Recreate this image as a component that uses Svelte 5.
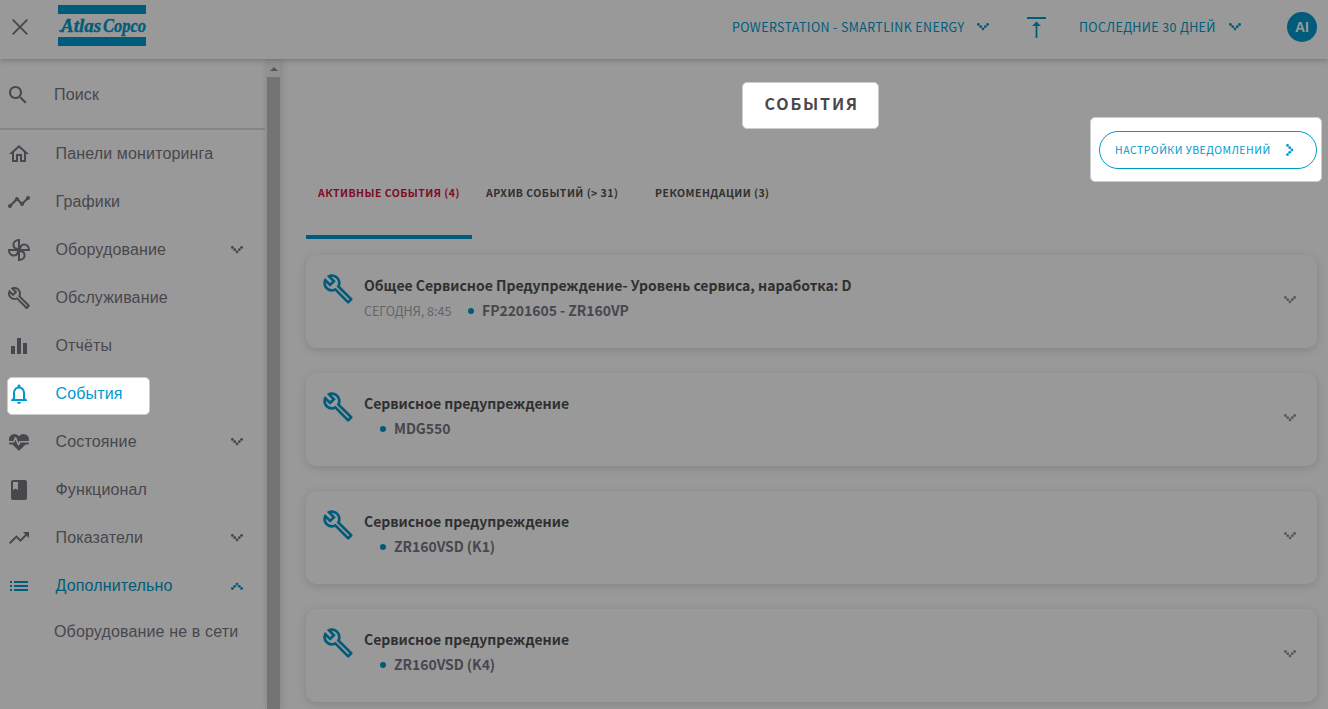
<script>
  const icons = {
    home: "M12 5.69l5 4.5V18h-2v-6H9v6H7v-7.81l5-4.5M12 3L2 12h3v8h6v-6h2v6h6v-8h3L12 3z",
    timeline:
      "M23 8c0 1.1-.9 2-2 2-.18 0-.35-.02-.51-.07l-3.56 3.55c.05.16.07.34.07.52 0 1.1-.9 2-2 2s-2-.9-2-2c0-.18.02-.36.07-.52l-2.55-2.55c-.16.05-.34.07-.52.07s-.36-.02-.52-.07l-4.55 4.56c.05.16.07.33.07.51 0 1.1-.9 2-2 2s-2-.9-2-2 .9-2 2-2c.18 0 .35.02.51.07l4.56-4.55C8.02 9.36 8 9.18 8 9c0-1.1.9-2 2-2s2 .9 2 2c0 .18-.02.36-.07.52l2.55 2.55c.16-.05.34-.07.52-.07s.36.02.52.07l3.55-3.56C19.02 8.35 19 8.18 19 8c0-1.1.9-2 2-2s2 .9 2 2z",
    wrench:
      "M22.61 18.99l-9.08-9.08c.93-2.34.45-5.1-1.44-7C9.79.61 6.21.4 3.66 2.26L7.5 6.11 6.08 7.52 2.25 3.69C.39 6.23.6 9.82 2.9 12.11c1.86 1.86 4.57 2.35 6.89 1.48l9.11 9.11c.39.39 1.02.39 1.41 0l2.3-2.3c.4-.38.4-1.01 0-1.41zm-3 1.6l-9.46-9.46c-.61.45-1.29.72-2 .82-1.36.2-2.79-.21-3.83-1.25C3.37 9.76 2.93 8.5 3 7.26l3.09 3.09 4.24-4.24-3.09-3.09c1.24-.07 2.49.37 3.44 1.31 1.08 1.08 1.49 2.57 1.24 3.96-.12.71-.42 1.37-.88 1.96l9.45 9.45-.88.89z",
    bars: "M4 12h4v8H4zM10 4h4v16h-4zM16 9h4v11h-4z",
    bell: "M12 22c1.1 0 2-.9 2-2h-4c0 1.1.9 2 2 2zm6-6v-5c0-3.07-1.63-5.64-4.5-6.32V4c0-.83-.67-1.5-1.5-1.5s-1.5.67-1.5 1.5v.68C7.64 5.36 6 7.92 6 11v5l-2 2v1h16v-1l-2-2zm-2 1H8v-6c0-2.48 1.51-4.5 4-4.5s4 2.02 4 4.5v6z",
    heart:
      "M7.5,4A5.5,5.5 0 0,0 2,9.5C2,10 2.09,10.5 2.22,11H6.3L7.57,7.63C7.87,6.83 9.05,6.75 9.43,7.63L11.5,13L12.09,11.58C12.22,11.25 12.57,11 13,11H21.78C21.91,10.5 22,10 22,9.5A5.5,5.5 0 0,0 16.5,4C14.64,4 13,4.93 12,6.34C11,4.93 9.36,4 7.5,4M3,12.5A1,1 0 0,0 2,13.5A1,1 0 0,0 3,14.5H5.44L11,20C12,20.9 12,20.9 13,20L18.56,14.5H21A1,1 0 0,0 22,13.5A1,1 0 0,0 21,12.5H13.4L12.47,14.8C12.07,15.81 10.92,15.67 10.55,14.83L8.5,9.5L7.54,11.83C7.39,12.21 7.05,12.5 6.6,12.5H3Z",
    book: "M18 2H6c-1.1 0-2 .9-2 2v16c0 1.1.9 2 2 2h12c1.1 0 2-.9 2-2V4c0-1.1-.9-2-2-2zM6 4h5v8l-2.5-1.5L6 12V4z",
    trend: "M16 6l2.29 2.29-4.88 4.88-4-4L2 16.59 3.41 18l6-6 4 4 6.3-6.29L22 12V6z",
    list: "M3 13h2v-2H3v2zm0 4h2v-2H3v2zm0-8h2V7H3v2zm4 4h14v-2H7v2zm0 4h14v-2H7v2zM7 7v2h14V7H7z",
    search:
      "M15.5 14h-.79l-.28-.27C15.41 12.59 16 11.11 16 9.5 16 5.91 13.09 3 9.5 3S3 5.91 3 9.5 5.91 16 9.5 16c1.61 0 3.09-.59 4.23-1.57l.27.28v.79l5 4.99L20.49 19l-4.99-5zm-6 0C7.01 14 5 11.99 5 9.5S7.01 5 9.5 5 14 7.01 14 9.5 11.99 14 9.5 14z",
  };

  const chevronDots = [
    [1.4, 1.5],
    [3.7, 3.7],
    [6, 5.9],
    [8.3, 3.7],
    [10.6, 1.5],
  ];

  const menu = [
    { label: "Панели мониторинга", icon: "home" },
    { label: "Графики", icon: "timeline" },
    { label: "Оборудование", icon: "fan", arrow: "down" },
    { label: "Обслуживание", icon: "wrench" },
    { label: "Отчёты", icon: "bars" },
    { label: "События", icon: "bell", selected: true },
    { label: "Состояние", icon: "heart", arrow: "down" },
    { label: "Функционал", icon: "book" },
    { label: "Показатели", icon: "trend", arrow: "down" },
    { label: "Дополнительно", icon: "list", arrow: "up", open: true },
  ];

  const tabs = [
    { label: "АКТИВНЫЕ СОБЫТИЯ (4)", active: true },
    { label: "АРХИВ СОБЫТИЙ (> 31)" },
    { label: "РЕКОМЕНДАЦИИ (3)" },
  ];

  const events = [
    {
      title: "Общее Сервисное Предупреждение- Уровень сервиса, наработка: D",
      time: "СЕГОДНЯ, 8:45",
      machine: "FP2201605 - ZR160VP",
    },
    { title: "Сервисное предупреждение", machine: "MDG550" },
    { title: "Сервисное предупреждение", machine: "ZR160VSD (K1)" },
    { title: "Сервисное предупреждение", machine: "ZR160VSD (K4)" },
  ];
</script>

{#snippet icon(name)}
  <svg class="icon" viewBox="0 0 24 24">
    {#if name === "fan"}
      {#each [0, 90, 180, 270] as angle}
        <path
          class="blade"
          transform="rotate({angle} 12 12)"
          d="M12 12V2C8.6 2 6.4 4.2 6.4 6.8C6.4 9.4 8.8 11 12 11"
        />
      {/each}
    {:else}
      <path d={icons[name]} />
    {/if}
  </svg>
{/snippet}

{#snippet chevron(dir)}
  <svg class="chevron {dir}" viewBox="0 0 12 8">
    {#each chevronDots as [cx, cy]}
      <circle {cx} {cy} r="1.4" />
    {/each}
  </svg>
{/snippet}

<div class="page">
  <header>
    <svg class="close" viewBox="0 0 16 16"><path d="M.7 .7l14.6 14.6M15.3 .7L.7 15.3" /></svg>
    <svg class="logo" viewBox="0 0 88 41">
      <path d="M0 0h88v9H0zM0 32h88v9H0z" />
      <path class="swash" d="M1 25.3c1.5 1.6 4 .8 5.5-1.5M8 16.5c1.5-1.500 3-2 5-1.7" />
      <text x="3" y="26.5" textLength="40" lengthAdjust="spacingAndGlyphs">Atlas</text>
      <text x="45" y="26.5" textLength="43" lengthAdjust="spacingAndGlyphs">Copco</text>
    </svg>
    <div class="dropdown site"><span>POWERSTATION - SMARTLINK ENERGY</span>{@render chevron("down")}</div>
    <svg class="to-top" viewBox="0 0 19 21"><path d="M0 0h19v2H0zM9.5 4.5l4.5 4.5h-3.6v12H8.6V9H5z" /></svg>
    <div class="dropdown period"><span>ПОСЛЕДНИЕ 30 ДНЕЙ</span>{@render chevron("down")}</div>
    <div class="avatar">AI</div>
  </header>

  <div class="body">
    <aside>
      <div class="search">{@render icon("search")}<span>Поиск</span></div>
      <nav>
        {#each menu as item}
          <div class="item" class:selected={item.selected} class:open={item.open}>
            {@render icon(item.icon)}
            <span>{item.label}</span>
            {#if item.arrow}{@render chevron(item.arrow)}{/if}
          </div>
        {/each}
        <div class="subitem">Оборудование не в сети</div>
      </nav>
    </aside>
    <div class="scrollbar">
      <div class="arrow"></div>
      <div class="thumb"></div>
    </div>

    <main>
      <h1>СОБЫТИЯ</h1>
      <div class="settings">
        <button><span>НАСТРОЙКИ УВЕДОМЛЕНИЙ</span>{@render chevron("right")}</button>
      </div>
      <div class="tabs">
        {#each tabs as tab}
          <div class="tab" class:active={tab.active}>{tab.label}</div>
        {/each}
      </div>
      {#each events as event}
        <div class="card">
          {@render icon("wrench")}
          <div class="info">
            <div class="title">{event.title}</div>
            <div class="meta" class:untimed={!event.time}>
              {#if event.time}<span class="time">{event.time}</span>{/if}
              <i></i>
              <span class="machine">{event.machine}</span>
            </div>
          </div>
          {@render chevron("down")}
        </div>
      {/each}
    </main>
  </div>
</div>

<style>
  :global(body) {
    margin: 0;
    overflow: hidden;
  }

  .page {
    width: 1328px;
    height: 709px;
    overflow: hidden;
    display: flex;
    flex-direction: column;
    background: #999;
    color: #48474d;
    font-family: "Noto Sans CJK SC", "Noto Sans", sans-serif;
  }

  svg {
    display: block;
    flex: none;
    fill: currentColor;
  }

  .icon {
    width: 24px;
    height: 24px;
  }

  .blade {
    fill: none;
    stroke: currentColor;
    stroke-width: 2;
  }

  .chevron {
    width: 12px;
    height: 8px;
  }

  .chevron.up {
    transform: rotate(180deg);
  }

  .chevron.right {
    transform: rotate(-90deg);
  }

  header {
    position: relative;
    z-index: 2;
    box-sizing: border-box;
    flex: none;
    height: 59px;
    display: flex;
    align-items: flex-start;
    background: #999;
    box-shadow: 0 2px 5px rgba(0, 0, 0, 0.2);
    color: #005c7a;
  }

  .close {
    width: 16px;
    height: 16px;
    margin: 19px 0 0 12px;
    stroke: #48474d;
    stroke-width: 1.8;
  }

  .logo {
    width: 88px;
    height: 41px;
    margin: 5px 0 0 30px;
    overflow: visible;
  }

  .logo text {
    font: italic bold 19px "Liberation Serif", serif;
    stroke: currentColor;
    stroke-width: 0.4;
  }

  .swash {
    fill: none;
    stroke: currentColor;
    stroke-width: 1.3;
  }

  .dropdown {
    display: flex;
    align-items: center;
    justify-content: space-between;
    height: 54px;
    font-size: 12.5px;
    letter-spacing: 0.36px;
    white-space: nowrap;
  }

  .dropdown span {
    margin-top: -2px;
  }

  .site {
    width: 257px;
    margin-left: 586px;
  }

  .period {
    width: 162px;
    margin-left: 33px;
  }

  .to-top {
    width: 19px;
    height: 21px;
    margin: 17px 0 0 38px;
  }

  .avatar {
    width: 30px;
    height: 30px;
    margin: 12px 0 0 46px;
    border-radius: 50%;
    background: #005c7a;
    color: #999;
    font: bold 14px/31px "Liberation Sans", sans-serif;
    text-align: center;
  }

  .body {
    flex: 1;
    min-height: 0;
    display: flex;
  }

  aside {
    width: 265px;
    flex: none;
    font: 16px "Liberation Sans", Arial, sans-serif;
    letter-spacing: 0.15px;
  }

  .search {
    box-sizing: border-box;
    height: 71px;
    display: flex;
    align-items: center;
    gap: 24px;
    padding: 2px 0 0 6px;
    border-bottom: 2px solid #868686;
  }

  .item {
    position: relative;
    height: 48px;
    display: flex;
    align-items: center;
    padding: 0 22px 0 7px;
  }

  .item span {
    flex: 1;
    margin-left: 24.5px;
  }

  .item.open {
    color: #005c7a;
  }

  .item.selected {
    isolation: isolate;
    color: #0099cc;
  }

  .item.selected::before {
    content: "";
    position: absolute;
    z-index: -1;
    left: 7px;
    top: 7px;
    width: 141px;
    height: 36px;
    border: 1px solid #ccc;
    border-radius: 5px;
    background: #fff;
  }

  .subitem {
    height: 44px;
    padding-left: 54px;
    line-height: 44px;
  }

  .scrollbar {
    width: 15px;
    flex: none;
    display: flex;
    flex-direction: column;
    background: #919191;
    box-shadow: 2px 0 6px rgba(0, 0, 0, 0.12);
  }

  .arrow {
    margin: 8px 0 6px 5px;
    width: 0;
    border: solid transparent;
    border-width: 0 4px 4px;
    border-bottom-color: #555;
  }

  .thumb {
    flex: 1;
    width: 13px;
    margin-left: 2px;
    background: #747474;
  }

  main {
    flex: 1;
    display: flex;
    flex-direction: column;
    padding: 23px 6px 0 26px;
  }

  h1 {
    box-sizing: border-box;
    flex: none;
    width: 137px;
    height: 47px;
    margin: 0 0 0 436px;
    padding-left: 21.5px;
    border: 1px solid #ccc;
    border-radius: 5px;
    background: #fff;
    color: #48474d;
    font-size: 16px;
    font-weight: 700;
    line-height: 41px;
    letter-spacing: 1.85px;
  }

  .settings {
    box-sizing: border-box;
    flex: none;
    align-self: flex-end;
    width: 232px;
    height: 65px;
    margin-top: -12px;
    padding: 13px 4px 12px 8px;
    border: 1px solid #ccc;
    border-radius: 5px;
    background: #fff;
  }

  button {
    box-sizing: border-box;
    width: 218px;
    height: 38px;
    display: flex;
    align-items: center;
    justify-content: space-between;
    padding: 0 20px 0 15px;
    border: 1px solid #0099cc;
    border-radius: 19px;
    background: #fff;
    color: #0099cc;
    font-family: inherit;
    font-size: 10.5px;
    letter-spacing: 0.5px;
    white-space: nowrap;
  }

  button span {
    margin-top: -2px;
  }

  .tabs {
    flex: none;
    height: 57px;
    display: flex;
    color: #303030;
    font-size: 10.5px;
    font-weight: 700;
    line-height: 21px;
    letter-spacing: 0.47px;
    white-space: nowrap;
  }

  .tab {
    box-sizing: border-box;
    width: 166px;
    padding-left: 12px;
  }

  .tab.active {
    border-bottom: 4px solid #005c7a;
    color: #7f0a24;
  }

  .tab:nth-child(2) {
    padding-left: 14px;
  }

  .tab:nth-child(3) {
    padding-left: 17px;
  }

  .card {
    box-sizing: border-box;
    flex: none;
    width: 1011px;
    height: 93px;
    display: flex;
    align-items: flex-start;
    margin: 16px 0 9px;
    padding: 17px 21px 0 16px;
    border-radius: 10px;
    background: #999;
    box-shadow: 0 2px 8px rgba(0, 0, 0, 0.14);
  }

  .card .icon {
    width: 32px;
    height: 32px;
    margin-top: 1px;
    color: #005c7a;
  }

  .card > .chevron {
    margin-top: 24px;
    color: #585858;
  }

  .info {
    flex: 1;
    margin-left: 10px;
    white-space: nowrap;
  }

  .title {
    height: 26px;
    color: #303030;
    font-size: 14px;
    font-weight: 600;
    line-height: 27px;
    letter-spacing: -0.02px;
  }

  .meta {
    display: flex;
    align-items: center;
    height: 25px;
    font-size: 14px;
    line-height: 25px;
  }

  .meta.untimed {
    padding-left: 5px;
  }

  .meta i {
    width: 6px;
    height: 6px;
    margin: 0 8px 0 11px;
    border-radius: 50%;
    background: #005c7a;
  }

  .time {
    width: 93px;
    margin-top: -1px;
    color: #646464;
    font-size: 12.5px;
  }

  .machine {
    font-weight: 600;
    letter-spacing: -0.05px;
  }
</style>
